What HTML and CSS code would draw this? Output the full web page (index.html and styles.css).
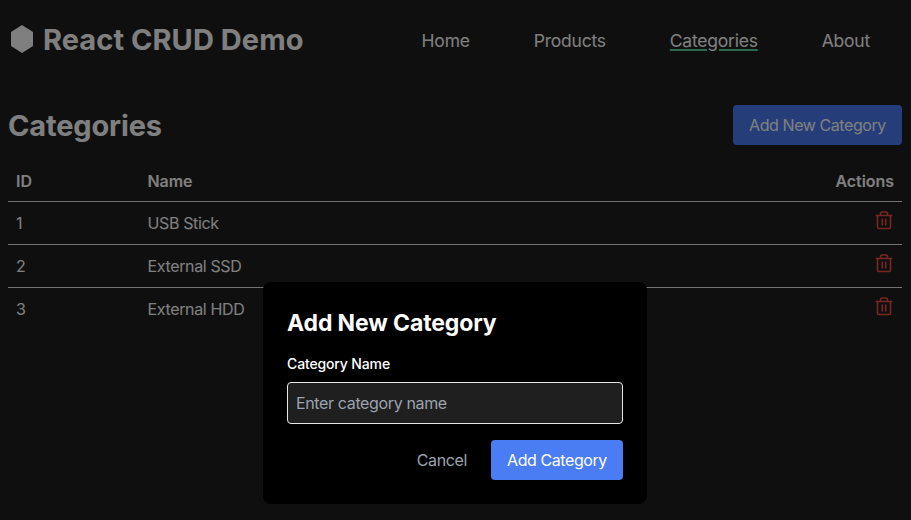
FILE: index.html
```html
<!DOCTYPE html>
<html lang="en">
<head>
<meta charset="utf-8">
<title>React CRUD Demo</title>
<link rel="stylesheet" href="styles.css">
</head>
<body>
<svg class="sprite" aria-hidden="true">
  <symbol id="trash" viewBox="0 0 20 20">
    <g fill="none" stroke="currentColor" stroke-width="1.6" stroke-linejoin="round">
      <path d="M1.7 5.5h16.6M3.5 5.5v11.4q0 1.6 1.6 1.6h9.8q1.6 0 1.6-1.6V5.5M6.5 5.3V3.7q0-1.7 1.7-1.7h3.6q1.7 0 1.7 1.7V5.3M8.3 8.6v6.8M11.7 8.6v6.8"/>
    </g>
  </symbol>
</svg>
<header class="header">
  <div class="brand">
    <svg class="logo" viewBox="0 0 22 28"><path d="M11 0l11 7v14l-11 7L0 21V7z" fill="currentColor"/></svg>
    <span class="brand-name">React CRUD Demo</span>
  </div>
  <nav class="nav">
    <a>Home</a><a>Products</a><a class="active">Categories</a><a>About</a>
  </nav>
</header>
<main>
  <div class="bar">
    <h1>Categories</h1>
    <button class="button button-new">Add New Category</button>
  </div>
  <table>
    <thead><tr><th class="id">ID</th><th>Name</th><th class="actions">Actions</th></tr></thead>
    <tbody>
      <tr><td>1</td><td>USB Stick</td><td class="actions"><svg class="trash"><use href="#trash"/></svg></td></tr>
      <tr><td>2</td><td>External SSD</td><td class="actions"><svg class="trash"><use href="#trash"/></svg></td></tr>
      <tr><td>3</td><td>External HDD</td><td class="actions"><svg class="trash"><use href="#trash"/></svg></td></tr>
    </tbody>
  </table>
</main>
<div class="overlay">
  <form class="modal">
    <h2>Add New Category</h2>
    <label for="name">Category Name</label>
    <input id="name" type="text" placeholder="Enter category name">
    <div class="modal-actions">
      <button type="button" class="button cancel">Cancel</button>
      <button type="button" class="button button-add">Add Category</button>
    </div>
  </form>
</div>
</body>
</html>
```
FILE: styles.css
```css
* { box-sizing: border-box; margin: 0; }
html { overflow: hidden; }
body {
  padding: 0 9px 0 8px;
  background: #1f1f1f;
  color: #fff;
  font: 16px/24px Inter, "Liberation Sans", sans-serif;
  letter-spacing: -0.36px;
}
.sprite { position: absolute; width: 0; height: 0; }
.header { display: flex; justify-content: space-between; height: 80px; align-items: center; }
.brand { display: flex; align-items: center; gap: 10px; padding-left: 3px; }
.logo { width: 22px; height: 28px; margin-top: -3px; }
.brand-name { font-size: 29px; line-height: 36px; font-weight: 700; letter-spacing: 0.06px; margin-top: -1px; }
.nav { display: flex; gap: 64px; padding: 2px 32px 0 0; font-size: 17.5px; line-height: 28px; letter-spacing: -0.22px; }
.active { text-decoration: underline 2px #55d6a4; text-underline-offset: 2px; }
.bar { display: flex; justify-content: space-between; align-items: center; margin-top: 25px; height: 40px; }
h1 { font-size: 29px; line-height: 36px; font-weight: 700; letter-spacing: -0.15px; padding-top: 2px; }
.button { height: 40px; padding: 0 16px; border: 0; border-radius: 4px; background: #4a7cf3; color: #fff; font: inherit; letter-spacing: inherit; }
.button-new { width: 169px; letter-spacing: -0.42px; white-space: nowrap; }
.button-add { width: 132px; letter-spacing: -0.42px; white-space: nowrap; }
table { width: 100%; margin-top: 16px; border-collapse: separate; border-spacing: 0; }
th { height: 41px; padding: 0 8px; text-align: left; font-weight: 600; letter-spacing: -0.05px; border-bottom: 1px solid #e5e7eb; }
td { height: 43px; padding: 0 8px; border-bottom: 1px solid #e5e7eb; }
tbody tr:last-child td { border-bottom-color: transparent; }
.id { width: 131.5px; }
.actions { text-align: right; }
.trash { display: inline-block; width: 20px; height: 20px; color: #ef4f44; vertical-align: middle; margin-top: -10px; }
.overlay {
  position: fixed;
  top: 0;
  left: 0;
  width: 100%;
  height: 786px;
  padding-right: 1px;
  display: flex;
  justify-content: center;
  align-items: center;
  background: rgba(0, 0, 0, .5);
}
.modal { width: 384px; height: 222px; padding: 24px; border-radius: 8px; background: #000; }
h2 { font-size: 23px; line-height: 32px; font-weight: 700; padding-top: 1px; margin-bottom: 15px; letter-spacing: -0.12px; }
label { display: block; font-size: 14px; line-height: 20px; font-weight: 500; margin-bottom: 8px; letter-spacing: -0.14px; }
input { display: block; width: 100%; height: 42px; padding: 8px; border: 1px solid #e5e7eb; border-radius: 4px; background: #1f1f1f; color: #fff; font: inherit; letter-spacing: inherit; }
input::placeholder { color: #9ca3af; opacity: 1; }
.modal-actions { display: flex; justify-content: flex-end; gap: 8px; margin-top: 16px; }
.cancel { background: transparent; color: #9ca3af; }
```
